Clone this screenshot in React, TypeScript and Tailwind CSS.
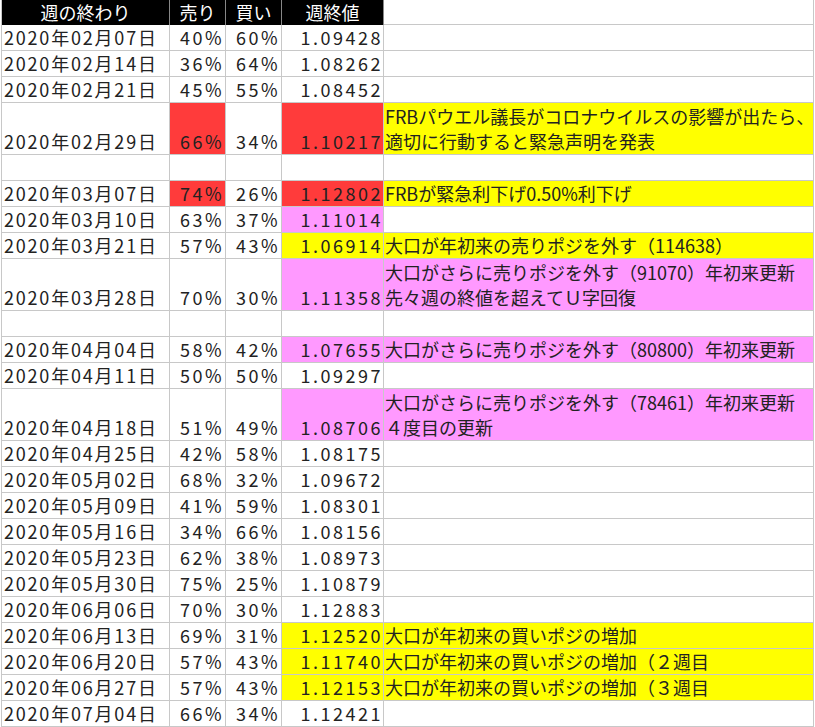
import React from "react";

type Row = { d?: string; s?: string; b?: string; c?: string; n?: string[]; sc?: string; cc?: string; nc?: string; h?: number };
const R = "bg-[#ff3b3b]", Y = "bg-[#ffff00]", P = "bg-[#ff99ff]";
const rows: Row[] = [
  { d: "2020年02月07日", s: "40%", b: "60%", c: "1.09428" },
  { d: "2020年02月14日", s: "36%", b: "64%", c: "1.08262" },
  { d: "2020年02月21日", s: "45%", b: "55%", c: "1.08452" },
  { d: "2020年02月29日", s: "66%", b: "34%", c: "1.10217", sc: R, cc: R, nc: Y, h: 52, n: ["FRBパウエル議長がコロナウイルスの影響が出たら、", "適切に行動すると緊急声明を発表"] },
  {},
  { d: "2020年03月07日", s: "74%", b: "26%", c: "1.12802", sc: R, cc: R, nc: Y, n: ["FRBが緊急利下げ0.50%利下げ"] },
  { d: "2020年03月10日", s: "63%", b: "37%", c: "1.11014", cc: P },
  { d: "2020年03月21日", s: "57%", b: "43%", c: "1.06914", cc: Y, nc: Y, n: ["大口が年初来の売りポジを外す（114638）"] },
  { d: "2020年03月28日", s: "70%", b: "30%", c: "1.11358", cc: P, nc: P, h: 52, n: ["大口がさらに売りポジを外す（91070）年初来更新", "先々週の終値を超えてＵ字回復"] },
  {},
  { d: "2020年04月04日", s: "58%", b: "42%", c: "1.07655", cc: P, nc: P, n: ["大口がさらに売りポジを外す（80800）年初来更新"] },
  { d: "2020年04月11日", s: "50%", b: "50%", c: "1.09297" },
  { d: "2020年04月18日", s: "51%", b: "49%", c: "1.08706", cc: P, nc: P, h: 52, n: ["大口がさらに売りポジを外す（78461）年初来更新", "４度目の更新"] },
  { d: "2020年04月25日", s: "42%", b: "58%", c: "1.08175" },
  { d: "2020年05月02日", s: "68%", b: "32%", c: "1.09672" },
  { d: "2020年05月09日", s: "41%", b: "59%", c: "1.08301" },
  { d: "2020年05月16日", s: "34%", b: "66%", c: "1.08156" },
  { d: "2020年05月23日", s: "62%", b: "38%", c: "1.08973" },
  { d: "2020年05月30日", s: "75%", b: "25%", c: "1.10879" },
  { d: "2020年06月06日", s: "70%", b: "30%", c: "1.12883" },
  { d: "2020年06月13日", s: "69%", b: "31%", c: "1.12520", cc: Y, nc: Y, n: ["大口が年初来の買いポジの増加"] },
  { d: "2020年06月20日", s: "57%", b: "43%", c: "1.11740", cc: Y, nc: Y, n: ["大口が年初来の買いポジの増加（２週目"] },
  { d: "2020年06月27日", s: "57%", b: "43%", c: "1.12153", cc: Y, nc: Y, n: ["大口が年初来の買いポジの増加（３週目"] },
  { d: "2020年07月04日", s: "66%", b: "34%", c: "1.12421" },
];

const cell = "border-r border-b border-[#c8c8c8] flex flex-col justify-end leading-[25px] whitespace-nowrap overflow-hidden";

export default function App() {
  return (
    <div className="w-[815px] h-[727px] overflow-hidden bg-white text-[18px] text-[#222]" style={{ fontFamily: '"Noto Sans CJK JP", sans-serif' }}>
      <div className="grid grid-cols-[168px_56px_56px_102px_430px] border-l border-[#c8c8c8] ml-[1px]">
        <div className="h-[25px] bg-black text-white text-center leading-[25px] border-r border-[#888]">週の終わり</div>
        <div className="h-[25px] bg-black text-white text-center leading-[25px] border-r border-[#888]">売り</div>
        <div className="h-[25px] bg-black text-white text-center leading-[25px] border-r border-[#888]">買い</div>
        <div className="h-[25px] bg-black text-white text-center leading-[25px] border-r border-[#888]">週終値</div>
        <div className="h-[25px] border-r border-b border-[#c8c8c8]"></div>
        {rows.map((r, i) => {
          const h = r.h === 52 ? "h-[52px]" : "h-[26px]";
          return (
            <React.Fragment key={i}>
              <div className={`${cell} ${h} pl-[2px] tracking-[1.8px]`}>{r.d}</div>
              <div className={`${cell} ${h} ${r.sc ?? ""} items-end pr-[1px] tracking-[2.5px]`}>{r.s}</div>
              <div className={`${cell} ${h} items-end pr-[1px] tracking-[2.5px]`}>{r.b}</div>
              <div className={`${cell} ${h} ${r.cc ?? ""} items-end pr-[0px] tracking-[2.5px]`}>{r.c}</div>
              <div className={`${cell} ${h} ${r.nc ?? ""} pl-[1px]`}>{r.n?.map((t, j) => <div key={j}>{t}</div>)}</div>
            </React.Fragment>
          );
        })}
      </div>
    </div>
  );
}
